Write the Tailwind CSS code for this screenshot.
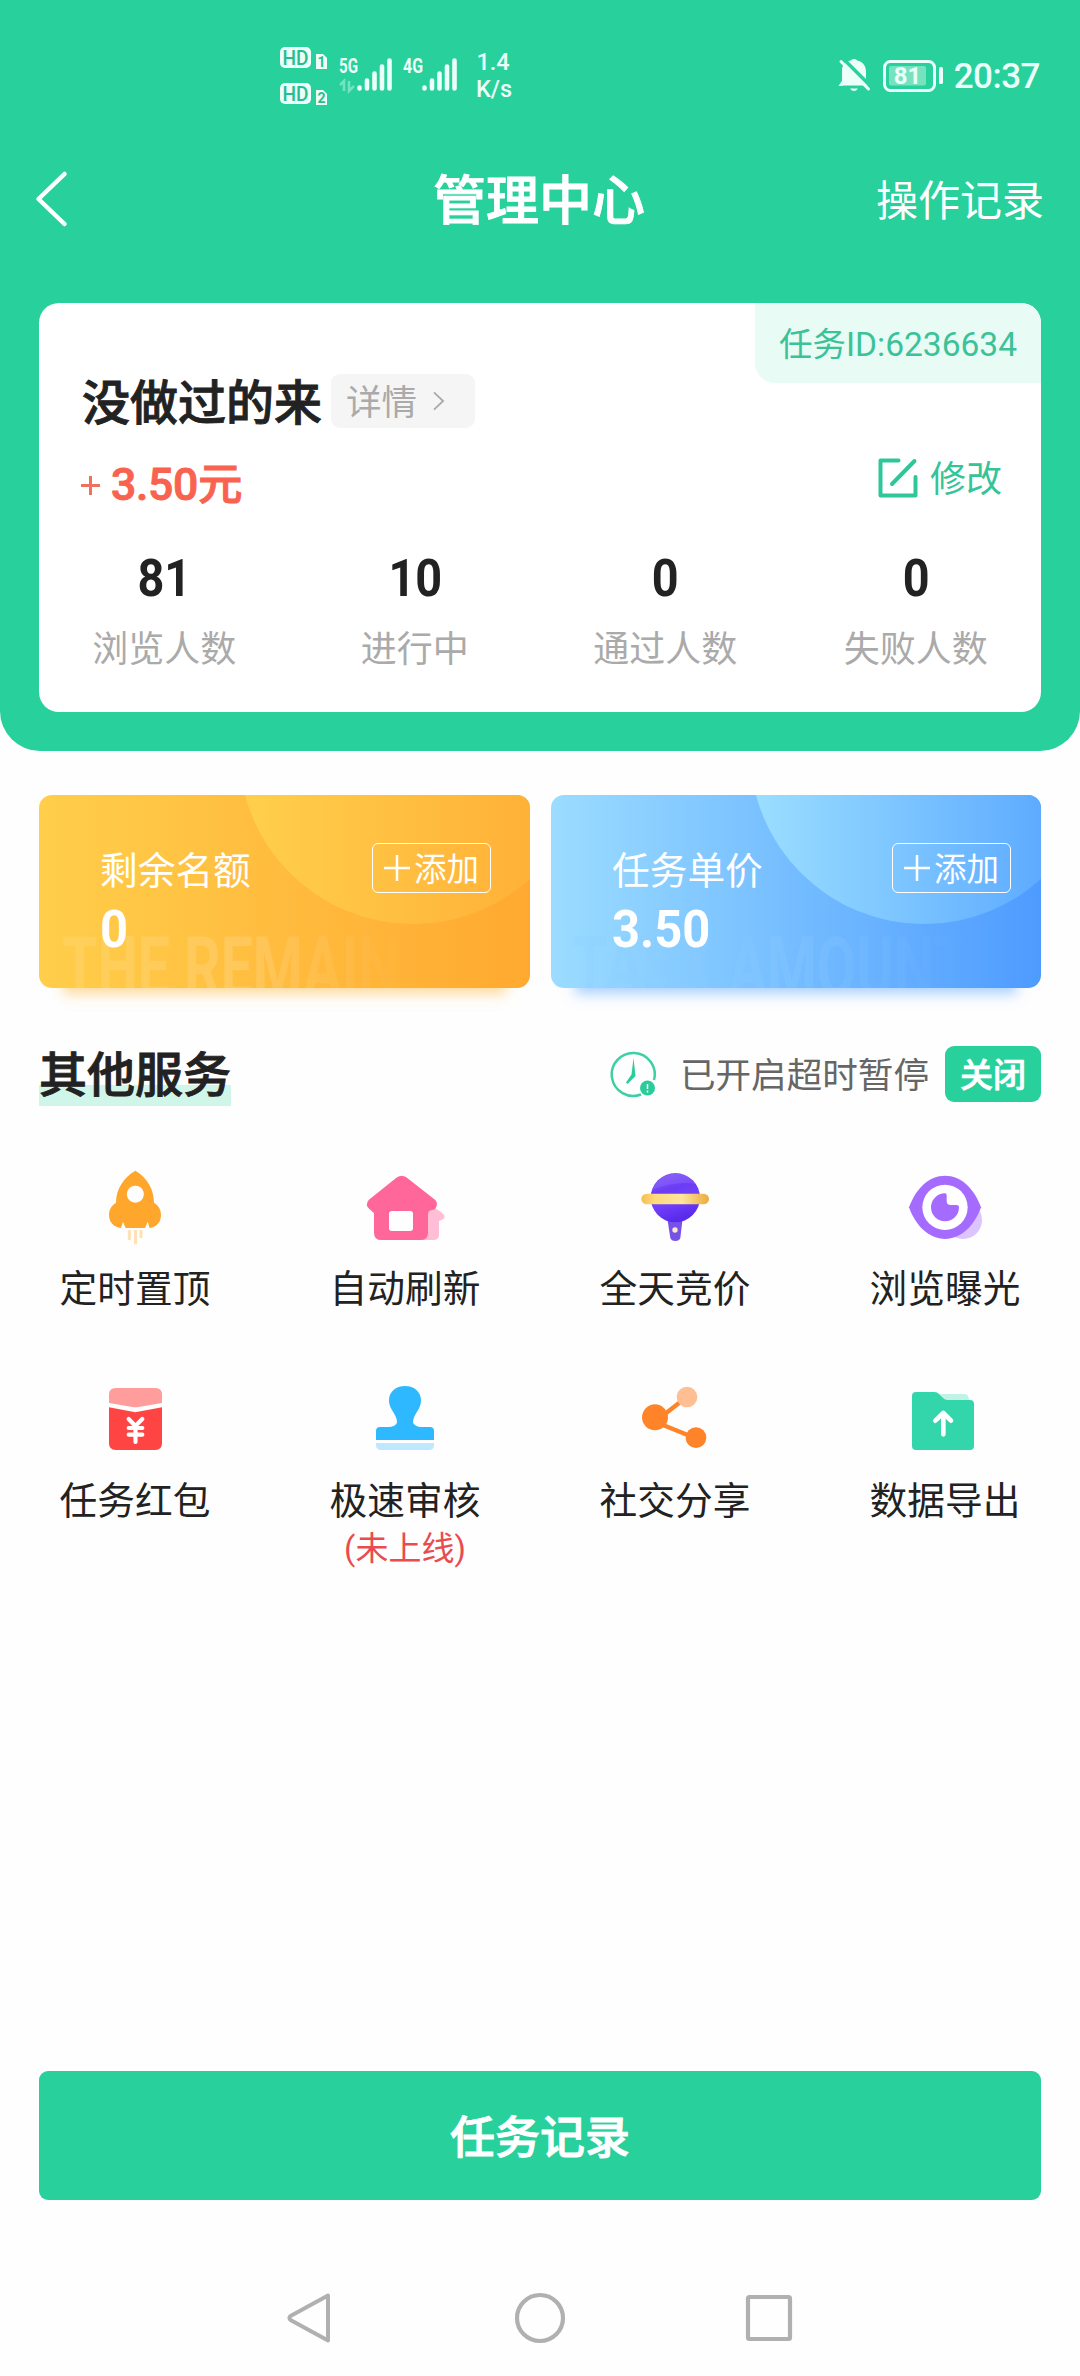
<!DOCTYPE html>
<html lang="zh-CN">
<head>
<meta charset="utf-8">
<title>管理中心</title>
<script src="https://cdn.jsdelivr.net/npm/@tailwindcss/browser@4"></script>
</head>
<body class="bg-[#fefefe]">
<div class="flex h-[2376px] w-[1080px] flex-col overflow-hidden font-['Roboto','Noto_Sans_CJK_SC',sans-serif] text-[#222]">

  <header class="flex h-[751px] shrink-0 flex-col rounded-b-[40px] bg-[#28d09c] text-white">
    <!-- status bar -->
    <div class="flex h-[150px] shrink-0 items-center justify-between pr-[40px] pl-[276px]">
      <div class="flex items-center gap-[14px]">
        <svg class="h-[66px] w-[186px]" viewBox="276 42 186 66" fill="#ecfff8">
          <g font-family="Roboto" font-weight="700">
            <rect x="280" y="47" width="31" height="21" rx="5"/><rect x="280" y="83" width="31" height="21" rx="5"/>
            <path d="M316 54h7l4 4v11h-11zM316 90h7l4 4v11h-11z"/>
            <g fill="#28bd8f">
              <text x="295.500" y="64.500" font-size="20" text-anchor="middle" font-weight="500" textLength="26" lengthAdjust="spacingAndGlyphs">HD</text>
              <text x="295.500" y="100.500" font-size="20" text-anchor="middle" font-weight="500" textLength="26" lengthAdjust="spacingAndGlyphs">HD</text>
              <text x="321.500" y="67" font-size="14" text-anchor="middle">1</text>
              <text x="321.500" y="103" font-size="14" text-anchor="middle">2</text>
            </g>
            <text x="339" y="73" font-size="21" textLength="19" lengthAdjust="spacingAndGlyphs">5G</text>
            <text x="403" y="73" font-size="21" textLength="20" lengthAdjust="spacingAndGlyphs">4G</text>
          </g>
          <g fill="none" stroke="#ecfff8" stroke-width="4.600" stroke-linecap="round">
            <path d="M359.500 88.500v-1M367 88.500v-8M374.500 88.500v-15M382 88.500v-22M389.500 88.500v-28"/>
            <path d="M424.500 88.500v-1M432 88.500v-8M439.500 88.500v-15M447 88.500v-22M454.500 88.500v-28"/>
          </g>
          <path d="M340 85l4-4v10M349 81v10l5-5" fill="none" stroke="#ecfff8" stroke-width="2.500" opacity=".4"/>
        </svg>
        <div class="w-[34px] pt-[2px] text-center text-[23.500px] leading-[27px] font-medium text-[#ecfff8]">1.4<br>K/s</div>
      </div>
      <div class="flex items-center gap-[10px] text-[#ecfff8]">
        <svg class="h-[36px] w-[108px]" viewBox="836 57 108 36">
          <path d="M842 84V70c0-5 4-9 9-9.500 1-2 5-2 6 0 6 1 9 6 9 11v9l4 5h-29z" fill="currentColor"/>
          <path d="M838.500 86l4-6v6z" fill="currentColor"/>
          <path d="M850 88.500h8q-4 5-8 0z" fill="currentColor"/>
          <path d="M843 58.500l28 28" stroke="#28d09c" stroke-width="3.500"/>
          <path d="M841 61.500L868.500 89" stroke="currentColor" stroke-width="3" stroke-linecap="round"/>
          <rect x="884.500" y="61.500" width="50" height="29" rx="6" fill="none" stroke="currentColor" stroke-width="3"/>
          <rect x="889" y="66" width="37" height="19.500" rx="2" fill="currentColor" opacity=".4"/>
          <rect x="939" y="67" width="4" height="17" rx="1.500" fill="currentColor"/>
          <text x="907.500" y="84" font-family="Roboto" font-size="24" font-weight="700" text-anchor="middle" fill="currentColor">81</text>
        </svg>
        <div class="pt-[3px] text-[35px] leading-[36px] font-medium tracking-[-0.5px]">20:37</div>
      </div>
    </div>

    <!-- title bar -->
    <div class="grid h-[98px] shrink-0 grid-cols-3 items-center pr-[36px] pl-[34px]">
      <svg class="h-[60px] w-[36px]" viewBox="34 168 36 60" fill="none" stroke="#fff" stroke-width="4.500" stroke-linecap="round" stroke-linejoin="round"><path d="M64.500 173L38.500 198l26 25"/></svg>
      <h1 class="pt-[6px] text-center text-[53px] leading-[60px] font-medium whitespace-nowrap [-webkit-text-stroke:0.9px_currentColor]">管理中心</h1>
      <div class="pt-[5px] text-right text-[42px] leading-[50px]">操作记录</div>
    </div>

    <!-- task card -->
    <section class="relative mx-[39px] mt-[55px] flex h-[409px] flex-col overflow-hidden rounded-[20px] bg-white text-[#222]">
      <div class="absolute top-0 right-0 flex h-[80px] w-[286px] items-center justify-center rounded-bl-[20px] bg-[#e9fbf5] pt-[4px] text-[33.500px] text-[#3cc298]">任务ID:6236634</div>
      <div class="mt-[71px] ml-[43px] flex h-[54px] items-center">
        <h2 class="pt-[6px] text-[48px] leading-[54px] font-medium [-webkit-text-stroke:0.9px_currentColor]">没做过的来</h2>
        <div class="ml-[9px] flex h-[54px] w-[144px] items-center rounded-[9px] bg-[#f5f5f5] pl-[15px] text-[35.500px] text-[#aaa]"><span class="pt-[6px]">详情</span>
          <svg class="ml-[16px] h-[20px] w-[12px]" viewBox="0 0 13 22" fill="none" stroke="#aaa" stroke-width="2"><path d="M1 1.500L11 11 1 20.500"/></svg>
        </div>
      </div>
      <div class="mt-[24px] flex h-[66px] items-center justify-between pr-[39px] pl-[42px]">
        <div class="flex items-center text-[#f9624f]">
          <svg class="mr-[11px] h-[19px] w-[19px]" viewBox="0 0 19 19" fill="none" stroke="#f0705f" stroke-width="3"><path d="M9.500 0v19M0 9.500h19"/></svg>
          <span class="text-[44.500px] leading-[60px] font-medium tracking-[-0.3px] [-webkit-text-stroke:0.9px_currentColor]">3.50元</span>
        </div>
        <div class="-mt-[14px] flex items-center gap-[12px] text-[36px] text-[#35c398]">
          <svg class="h-[40px] w-[40px]" viewBox="878.500 456.500 40 40" fill="none" stroke="#2fc69a" stroke-width="4" stroke-linecap="round" stroke-linejoin="round"><path d="M899 459h-18v35h35v-18.500M892.500 482.500l22.500-23"/></svg>
          <span class="pt-[4px]">修改</span>
        </div>
      </div>
      <div class="mt-[31px] grid grid-cols-4 text-center">
        <div><div class="scale-x-90 text-[52px] leading-[60px] font-bold">81</div><div class="mt-[20px] text-[36px] leading-[42px] text-[#aaa]">浏览人数</div></div>
        <div><div class="scale-x-90 text-[52px] leading-[60px] font-bold">10</div><div class="mt-[20px] text-[36px] leading-[42px] text-[#aaa]">进行中</div></div>
        <div><div class="scale-x-90 text-[52px] leading-[60px] font-bold">0</div><div class="mt-[20px] text-[36px] leading-[42px] text-[#aaa]">通过人数</div></div>
        <div><div class="scale-x-90 text-[52px] leading-[60px] font-bold">0</div><div class="mt-[20px] text-[36px] leading-[42px] text-[#aaa]">失败人数</div></div>
      </div>
    </section>
  </header>

  <!-- quota and price cards -->
  <section class="mx-[39px] mt-[44px] grid h-[193px] shrink-0 grid-cols-[491px_490px] gap-[21px] text-white">
    <div class="rounded-[13px] shadow-[0_30px_12px_-24px_rgba(255,185,60,.5)]">
      <div class="relative flex h-full justify-between overflow-hidden rounded-[13px] bg-linear-to-r from-[#ffce4a] to-[#ffa930] pr-[39px] pl-[61px]">
        <div class="absolute -top-[219px] left-[200px] h-[348px] w-[348px] rounded-full bg-linear-to-r from-[#ffd04c] to-[#ffab33]"></div>
        <div class="absolute top-[131px] left-[23px] origin-left scale-x-[.68] bg-linear-to-r from-white/10 via-white/15 to-transparent bg-clip-text text-[84px] leading-[84px] font-bold whitespace-nowrap text-transparent">THE REMAINI</div>
        <div class="relative pt-[53px]">
          <div class="text-[37.700px] leading-[46px]">剩余名额</div>
          <div class="mt-[6px] origin-left scale-x-[.94] text-[52px] leading-[60px] font-bold">0</div>
        </div>
        <div class="relative mt-[48px] flex h-[50px] w-[119px] items-center justify-center gap-[4px] rounded-[6px] border border-white text-[32.500px]">
          <svg class="h-[26px] w-[26px]" viewBox="0 0 26 26" stroke="#fff" stroke-width="2.500"><path d="M13 0v26M0 13h26"/></svg><span class="pt-[5px]">添加</span>
        </div>
      </div>
    </div>
    <div class="rounded-[13px] shadow-[0_30px_12px_-24px_rgba(90,165,255,.5)]">
      <div class="relative flex h-full justify-between overflow-hidden rounded-[13px] bg-linear-to-r from-[#9bdcff] to-[#4e9bff] pr-[30px] pl-[61px]">
        <div class="absolute -top-[219px] left-[199px] h-[348px] w-[348px] rounded-full bg-linear-to-r from-[#9cdfff] to-[#52a1ff]"></div>
        <div class="absolute top-[131px] left-[21px] origin-left scale-x-[.68] bg-linear-to-r from-[#7cc8ff]/10 via-[#8dccff]/30 to-transparent bg-clip-text text-[84px] leading-[84px] font-bold whitespace-nowrap text-transparent">TASK AMOUNT</div>
        <div class="relative pt-[53px]">
          <div class="text-[37.700px] leading-[46px]">任务单价</div>
          <div class="mt-[6px] origin-left scale-x-[.94] text-[52px] leading-[60px] font-bold">3.50</div>
        </div>
        <div class="relative mt-[48px] flex h-[50px] w-[119px] items-center justify-center gap-[4px] rounded-[6px] border border-white text-[32.500px]">
          <svg class="h-[26px] w-[26px]" viewBox="0 0 26 26" stroke="#fff" stroke-width="2.500"><path d="M13 0v26M0 13h26"/></svg><span class="pt-[5px]">添加</span>
        </div>
      </div>
    </div>
  </section>

  <!-- section heading -->
  <div class="mx-[39px] mt-[58px] flex h-[60px] shrink-0 items-start justify-between">
    <h2 class="bg-linear-to-t from-[#cff6e9] from-[35%] to-transparent to-[35%] text-[48px] leading-[60px] font-medium [-webkit-text-stroke:0.9px_currentColor]">其他服务</h2>
    <div class="flex h-[56px] items-center text-[35.600px] text-[#666]">
      <svg class="mr-[23px] h-[48px] w-[48px]" viewBox="609 1050 48 48" fill="none">
        <path d="M641 1094.500A21.500 21.500 0 1 1 654 1080" stroke="#3ecfa3" stroke-width="2.500"/>
        <path d="M633.500 1058l2 18-8 8-1.500-1.500 5.500-8z" fill="#2bcb9a"/>
        <circle cx="647.500" cy="1088" r="7.500" fill="#2bcb9a"/><path d="M647.500 1084v5M647.500 1090.500v2" stroke="#fff" stroke-width="1.500"/>
      </svg>
      <span class="pt-[6px]">已开启超时暂停</span>
      <div class="ml-[16px] flex h-[56px] w-[96px] items-center justify-center rounded-[9px] bg-[#28d09c] pt-[4px] text-[33px] font-medium text-white [-webkit-text-stroke:0.7px_currentColor]">关闭</div>
    </div>
  </div>

  <!-- services -->
  <section class="mt-[57px] grid shrink-0 grid-cols-4 text-center text-[37.700px] leading-[46px]">
    <div class="flex h-[212px] flex-col items-center">
      <svg class="mb-[13px] h-[90px] w-[100px]" viewBox="105 39 300 270">
        <path fill="#ffa72c" fill-rule="evenodd" d="M256 62c36 21 56 56 56 96 15 9 21 22 21 37 0 22-14 36-34 39l-6-19-8 19h-58l-8-19-6 19c-22-3-36-17-36-39 0-15 6-28 21-37 0-40 22-75 58-96zM256 107a25.500 25.500 0 1 0 .1 0z"/>
        <path stroke="#ffe1b5" stroke-width="9" d="M238 240v30M256.500 240v43M273 240v24"/>
      </svg>定时置顶
    </div>
    <div class="flex flex-col items-center">
      <svg class="mb-[13px] h-[90px] w-[100px]" viewBox="915 39 300 270">
        <path fill="#ffbdd6" d="M1120 270V190l36-16 24 18q8 9-1 16-6 4-12 4v42q0 16-18 16z"/>
        <path fill="#ff6699" fill-rule="evenodd" d="M1041 82q14-10 28 0l86 67q8 8 5 18-3 12-14 13-12 2-12 12v56q0 22-22 22H994q-22 0-22-22v-58q-5-6-14-13-14-12-2-27zM1025 183q-8 0-8 8v44q0 8 8 8h56q8 0 8-8v-44q0-8-8-8z"/>
      </svg>自动刷新
    </div>
    <div class="flex flex-col items-center">
      <svg class="mb-[13px] h-[90px] w-[100px]" viewBox="135 39 300 270">
        <defs>
          <linearGradient id="ball" x1="0" y1="0" x2="0.300" y2="1"><stop offset="0" stop-color="#8860f4"/><stop offset=".4" stop-color="#6c3cf4"/><stop offset=".65" stop-color="#7341fb"/><stop offset="1" stop-color="#5a2bec"/></linearGradient>
          <linearGradient id="ring"><stop offset="0" stop-color="#f5c04e"/><stop offset=".2" stop-color="#ffda7c"/><stop offset=".6" stop-color="#ffe49b"/><stop offset="1" stop-color="#e9ac3d"/></linearGradient>
        </defs>
        <path fill="#7652e6" d="M263 212h44l-6 52q-3 9-15 9t-15-9z"/>
        <circle cx="286" cy="143" r="74" fill="url(#ball)"/>
        <path fill="#9b78ff" opacity=".3" d="M216 120q26-48 76-50 35 3 55 32-60-10-131 18z"/>
        <rect x="184" y="131" width="203" height="32" rx="16" fill="url(#ring)"/>
        <circle cx="285" cy="240" r="8" fill="#ffe8c9"/>
      </svg>全天竞价
    </div>
    <div class="flex flex-col items-center">
      <svg class="mb-[13px] h-[90px] w-[100px]" viewBox="945 39 300 270">
        <circle cx="1149" cy="210" r="57" fill="#dcc4ff"/>
        <path fill="#a56bff" d="M987 172c20-56 60-95 108-95s88 39 108 95c-20 56-60 95-108 95s-88-39-108-95z"/>
        <circle cx="1095" cy="172" r="68" fill="#fff"/>
        <path fill="#a56bff" d="M1095 130a42 42 0 1 0 42 42c0-5-3-7-8-7h-17c-8 0-12-4-12-12v-16c0-5-1-7-5-7z"/>
      </svg>浏览曝光
    </div>
    <div class="flex flex-col items-center">
      <svg class="mb-[13px] h-[90px] w-[100px]" viewBox="105 675 300 270">
        <path fill="#ff9c9c" d="M177 734q0-20 20-20h119q20 0 20 20v25l-75 13-9 0-75-13z"/>
        <path fill="#ff4444" d="M177 772l79 15 80-15v108q0 20-20 20H197q-20 0-20-20z"/>
        <path fill="none" stroke="#fff" stroke-width="12.500" stroke-linecap="round" stroke-linejoin="round" d="M236 807l20 21 21-21M256.500 828v48M236 834h41M236 854h41"/>
      </svg>任务红包
    </div>
    <div class="flex flex-col items-center">
      <svg class="mb-[13px] h-[90px] w-[100px]" viewBox="915 675 300 270">
        <path fill="#2eb8ff" d="M1065 708c28 0 48 18 48 43 0 30-24 40-24 67 6 10 16 13 28 13h23q12 0 12 12v27H978v-27q0-12 12-12h25c12 0 22-4 26-13 0-27-24-37-24-67 0-25 20-43 48-43z"/>
        <path fill="#c0e8fc" d="M978 879h174v6q0 15-15 15H993q-15 0-15-15z"/>
      </svg>极速审核
      <div class="mt-[5px] text-[33px] leading-[40px] text-[#ea4b4f]">(未上线)</div>
    </div>
    <div class="flex flex-col items-center">
      <svg class="mb-[13px] h-[90px] w-[100px]" viewBox="135 675 300 270">
        <path stroke="#ff8429" stroke-width="13" d="M225 815l75-58M225 815l122 50"/>
        <circle cx="321" cy="741" r="31" fill="#ffbf92"/><circle cx="225" cy="802" r="39" fill="#ff8429"/><circle cx="348" cy="863" r="31" fill="#ff8429"/>
      </svg>社交分享
    </div>
    <div class="flex flex-col items-center">
      <svg class="mb-[13px] h-[90px] w-[100px]" viewBox="945 675 300 270">
        <path fill="#c1f3e5" d="M1068 732h88q8 0 12 18l-4 10h-80z"/>
        <path fill="#33d6ab" d="M996 738q0-12 12-12h56q8 0 12 5l14 14q4 5 12 5h68q12 0 12 12v126q0 12-12 12h-162q-12 0-12-12z"/>
        <path fill="none" stroke="#fff" stroke-width="14" stroke-linecap="round" stroke-linejoin="round" d="M1090 853v-62M1066 812l24-23 23 23"/>
      </svg>数据导出
    </div>
  </section>

  <button class="mx-[39px] mt-auto mb-[71px] flex h-[129px] shrink-0 items-center justify-center rounded-[9px] bg-[#28d09c] pt-[6px] text-[45px] font-medium text-white [-webkit-text-stroke:0.9px_currentColor]">任务记录</button>

  <!-- navigation bar -->
  <nav class="flex h-[105px] shrink-0 pt-[19px] pl-[285px]">
    <svg class="mr-[179px] h-[56px] w-[48px]" viewBox="285 2290 48 56" fill="none" stroke="#b0b0b0" stroke-width="4" stroke-linejoin="round"><path d="M328 2295.500v45L290.500 2320q-2-2 0-4z"/></svg>
    <svg class="mr-[175px] h-[56px] w-[56px]" viewBox="512 2290 56 56" fill="none" stroke="#b0b0b0" stroke-width="4.200"><circle cx="540" cy="2318" r="23"/></svg>
    <svg class="h-[56px] w-[52px]" viewBox="743 2290 52 56" fill="none" stroke="#b0b0b0" stroke-width="4.200"><rect x="748" y="2297" width="42" height="42" rx="1.500"/></svg>
  </nav>
</div>
</body>
</html>
